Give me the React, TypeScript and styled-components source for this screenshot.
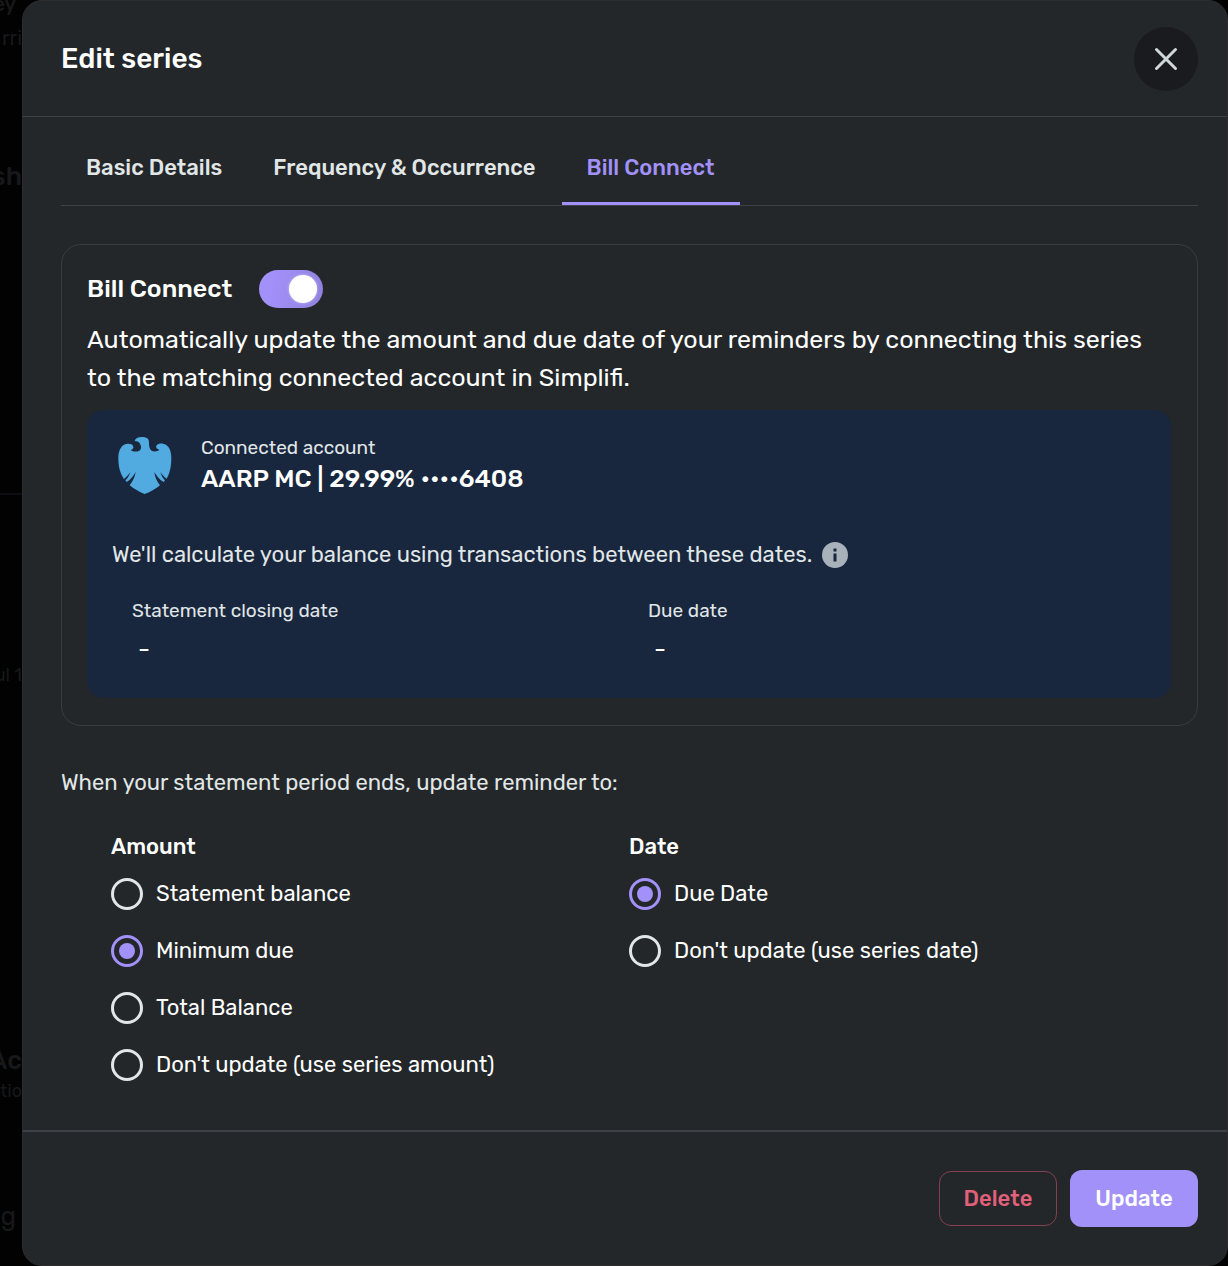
import React, { useState } from "react";
import styled, { createGlobalStyle } from "styled-components";

const color = {
  panel: "#23272a",
  line: "#3d4246",
  cardLine: "#383d41",
  text: "#ffffff",
  soft: "#e1e6e7",
  accent: "#a391fa",
  danger: "#e1607a",
  dangerLine: "#87404f",
  navy: "#18273e",
};

const GlobalStyle = createGlobalStyle`
  * { box-sizing: border-box; }
  body {
    margin: 0;
    background: #020203;
    color: ${color.text};
    font-family: Rubik, Inter, "Liberation Sans", sans-serif;
    font-size: 22px;
    line-height: 28px;
  }
  button, input { font: inherit; }
  h1, h2, h3, p, dl, dd { margin: 0; }
`;

const Screen = styled.div`
  display: grid;
  grid-template-columns: 22px minmax(0, 1fr);
  min-height: 100vh;
`;

const Behind = styled.div`
  display: flex;
  flex-direction: column;
  align-items: flex-end;
  overflow: hidden;
  color: #17181a;
  white-space: nowrap;
`;

const BehindText = styled.span<{ $gap: number; $size?: number; $bold?: boolean; $inset?: boolean }>`
  margin-top: ${(p) => p.$gap}px;
  padding-right: ${(p) => (p.$inset ? 6 : 0)}px;
  font-size: ${(p) => p.$size ?? 20}px;
  font-weight: ${(p) => (p.$bold ? 500 : 400)};
`;

const BehindRule = styled.div<{ $gap: number }>`
  width: 100%;
  margin-top: ${(p) => p.$gap}px;
  border-top: 2px solid #0d0d14;
`;

const Dialog = styled.main`
  display: flex;
  flex-direction: column;
  background: ${color.panel};
  border: 1px solid #2c2d2e;
  border-radius: 20px;
`;

const Header = styled.header`
  display: flex;
  align-items: center;
  justify-content: space-between;
  height: 116px;
  padding: 0 29px 0 38px;
  border-bottom: 1px solid ${color.line};
`;

const Title = styled.h1`
  font-size: 28px;
  line-height: 36px;
  font-weight: 500;
`;

const CloseButton = styled.button`
  display: grid;
  place-items: center;
  width: 64px;
  height: 64px;
  padding: 0;
  border: 0;
  border-radius: 50%;
  background: #1a1b1e;
  color: #d0d8da;
`;

const Body = styled.div`
  flex: 1;
  padding: 0 29px 48px 38px;
`;

const Tabs = styled.div`
  display: flex;
  height: 89px;
  border-bottom: 1px solid ${color.line};
`;

const Tab = styled.button<{ $active: boolean }>`
  padding: 16px 26px 0 25px;
  border: 0;
  border-bottom: 3px solid ${(p) => (p.$active ? color.accent : "transparent")};
  background: none;
  color: ${(p) => (p.$active ? color.accent : color.soft)};
  font-weight: 500;
  white-space: nowrap;
`;

const Card = styled.section`
  margin-top: 38px;
  padding: 25px 26px 27px 25px;
  border: 1px solid ${color.cardLine};
  border-radius: 20px;
`;

const CardHead = styled.div`
  display: flex;
  align-items: center;
  gap: 27px;
`;

const CardTitle = styled.label`
  font-size: 25px;
  line-height: 32px;
  font-weight: 500;
`;

const Switch = styled.input`
  appearance: none;
  display: flex;
  align-items: center;
  width: 64px;
  height: 38px;
  margin: 0;
  padding: 6px;
  border-radius: 19px;
  background: #555b60;
  &::before {
    content: "";
    width: 28px;
    height: 28px;
    border-radius: 50%;
    background: #fff;
    box-shadow: 0 0 3px rgba(255, 255, 255, 0.5);
  }
  &:checked {
    justify-content: flex-end;
    background: linear-gradient(100deg, #a391fa 20%, #9080dd);
  }
`;

const Lead = styled.p`
  margin-top: 13px;
  font-size: 25px;
  line-height: 38px;
`;

const Account = styled.div`
  margin-top: 13px;
  padding: 24px 25px 35px;
  border-radius: 16px;
  background: ${color.navy};
`;

const AccountHead = styled.div`
  display: flex;
  align-items: center;
  gap: 29px;
  padding-left: 6px;
`;

const Small = styled.div`
  color: ${color.soft};
  font-size: 19px;
  line-height: 28px;
`;

const AccountName = styled.div`
  font-size: 25px;
  line-height: 34px;
  font-weight: 500;
`;

const Note = styled.p`
  display: flex;
  align-items: center;
  gap: 10px;
  margin-top: 45px;
  color: ${color.soft};
`;

const Dates = styled.dl`
  display: grid;
  grid-template-columns: 1fr 1fr;
  column-gap: 18px;
  margin-top: 28px;
  padding-left: 20px;
`;

const DateValue = styled.dd`
  padding: 10px 6px 0;
  font-size: 25px;
`;

const Prompt = styled.p`
  margin-top: 43px;
  color: ${color.soft};
`;

const Options = styled.div`
  display: grid;
  grid-template-columns: 1fr 1fr;
  margin-top: 36px;
  padding: 0 51px 0 50px;
`;

const Group = styled.fieldset`
  display: flex;
  flex-direction: column;
  gap: 25px;
  min-width: 0;
  margin: 0;
  padding: 0;
  border: 0;
`;

const Legend = styled.legend`
  margin-bottom: 17px;
  padding: 0;
  font-weight: 500;
`;

const Choice = styled.label`
  display: flex;
  align-items: center;
  gap: 13px;
  height: 32px;
  white-space: nowrap;
`;

const Radio = styled.input`
  appearance: none;
  display: grid;
  place-items: center;
  width: 32px;
  height: 32px;
  margin: 0;
  border: 3px solid ${color.soft};
  border-radius: 50%;
  &:checked {
    border-color: ${color.accent};
  }
  &:checked::before {
    content: "";
    width: 16px;
    height: 16px;
    border-radius: 50%;
    background: ${color.accent};
  }
`;

const Footer = styled.footer`
  display: flex;
  align-items: center;
  justify-content: flex-end;
  gap: 13px;
  height: 135px;
  padding: 0 29px;
  border-top: 2px solid ${color.line};
`;

const Action = styled.button<{ $primary?: boolean }>`
  height: ${(p) => (p.$primary ? 57 : 55)}px;
  min-width: ${(p) => (p.$primary ? 128 : 118)}px;
  padding: 0 20px;
  border: ${(p) => (p.$primary ? "0" : `1px solid ${color.dangerLine}`)};
  border-radius: 12px;
  background: ${(p) => (p.$primary ? color.accent : "transparent")};
  color: ${(p) => (p.$primary ? "#fff" : color.danger)};
  font-weight: 500;
`;

const EagleLogo = () => (
  <svg width="54" height="58" viewBox="54 36 160 174" role="img" aria-label="Barclays">
    <path
      fill="#51abe1"
      d="M103 51 C105 42 115 38 128 39 C141 40 146 45 146 55 C146 66 147 76 154 80 C162 84 172 82 177 77 C169 76 165 68 169 64 C174 58 184 58 190 60 C206 63 213 81 213 103 C213 126 209 148 199 164 C192 160 185 152 180 144 C183 154 188 163 194 169 L190 174 C178 168 169 157 162 144 C163 158 170 173 179 184 C167 194 151 204 133 210 C116 204 100 194 88 184 C97 173 104 158 106 144 C99 157 90 168 79 174 L75 169 C82 163 87 154 90 144 C85 152 78 160 71 165 C59 149 54 126 54 103 C54 80 62 63 78 60 C86 58 95 60 98 65 C101 71 98 76 91 78 C98 84 110 84 117 80 C124 75 123 66 119 59 C115 52 109 52 103 51 Z"
    />
  </svg>
);

const InfoIcon = () => (
  <svg width="26" height="26" viewBox="0 0 26 26" role="img" aria-label="More information">
    <circle cx="13" cy="13" r="13" fill="#a9b1bb" />
    <path d="M11.500 6.500h3v3h-3zM11.500 11.500h3v8h-3z" fill={color.navy} />
  </svg>
);

const tabs = ["Basic Details", "Frequency & Occurrence", "Bill Connect"];
const amounts = ["Statement balance", "Minimum due", "Total Balance", "Don't update (use series amount)"];
const dates = ["Due Date", "Don't update (use series date)"];

type RadioGroupProps = { title: string; options: string[]; initial: string };

function RadioGroup({ title, options, initial }: RadioGroupProps) {
  const [value, setValue] = useState(initial);
  return (
    <Group>
      <Legend>{title}</Legend>
      {options.map((option) => (
        <Choice key={option}>
          <Radio type="radio" name={title} checked={value === option} onChange={() => setValue(option)} />
          {option}
        </Choice>
      ))}
    </Group>
  );
}

export default function App() {
  const [active, setActive] = useState("Bill Connect");
  const [connected, setConnected] = useState(true);
  return (
    <>
      <GlobalStyle />
      <Screen>
        <Behind aria-hidden="true">
          <BehindText $gap={-10} $bold $inset>ey</BehindText>
          <BehindText $gap={6}>rri</BehindText>
          <BehindText $gap={111} $size={26} $bold>sh</BehindText>
          <BehindRule $gap={302} />
          <BehindText $gap={166} $size={18}>ul 1</BehindText>
          <BehindText $gap={358} $size={26} $bold>Ac</BehindText>
          <BehindText $gap={2} $size={18}>tio</BehindText>
          <BehindText $gap={98} $size={26} $inset>g</BehindText>
        </Behind>
        <Dialog>
          <Header>
            <Title>Edit series</Title>
            <CloseButton aria-label="Close">
              <svg width="24" height="24" viewBox="0 0 24 24" fill="none" stroke="currentColor" strokeWidth="3" strokeLinecap="round">
                <path d="M2.500 2.500l19 19M21.500 2.500l-19 19" />
              </svg>
            </CloseButton>
          </Header>
          <Body>
            <Tabs role="tablist">
              {tabs.map((tab) => (
                <Tab key={tab} role="tab" aria-selected={tab === active} $active={tab === active} onClick={() => setActive(tab)}>
                  {tab}
                </Tab>
              ))}
            </Tabs>
            <Card>
              <CardHead>
                <CardTitle htmlFor="bill-connect">Bill Connect</CardTitle>
                <Switch id="bill-connect" type="checkbox" role="switch" checked={connected} onChange={() => setConnected(!connected)} />
              </CardHead>
              <Lead>
                Automatically update the amount and due date of your reminders by connecting this series to the matching
                connected account in Simplifi.
              </Lead>
              <Account>
                <AccountHead>
                  <EagleLogo />
                  <div>
                    <Small>Connected account</Small>
                    <AccountName>AARP MC | 29.99% ••••6408</AccountName>
                  </div>
                </AccountHead>
                <Note>
                  We'll calculate your balance using transactions between these dates.
                  <InfoIcon />
                </Note>
                <Dates>
                  <div>
                    <Small as="dt">Statement closing date</Small>
                    <DateValue>-</DateValue>
                  </div>
                  <div>
                    <Small as="dt">Due date</Small>
                    <DateValue>-</DateValue>
                  </div>
                </Dates>
              </Account>
            </Card>
            <Prompt>When your statement period ends, update reminder to:</Prompt>
            <Options>
              <RadioGroup title="Amount" options={amounts} initial="Minimum due" />
              <RadioGroup title="Date" options={dates} initial="Due Date" />
            </Options>
          </Body>
          <Footer>
            <Action>Delete</Action>
            <Action $primary>Update</Action>
          </Footer>
        </Dialog>
      </Screen>
    </>
  );
}
